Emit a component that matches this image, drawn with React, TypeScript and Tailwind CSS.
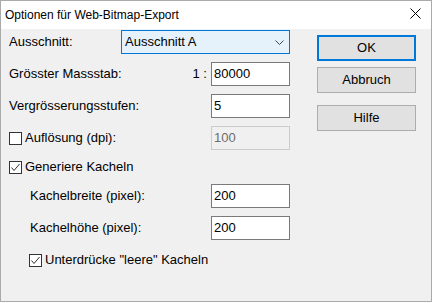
import type { ReactNode } from "react";

const sans = "font-['Liberation_Sans',Arial,sans-serif]";

function Checkbox({ checked }: { checked?: boolean }) {
  return (
    <span className="flex h-[13px] w-[13px] shrink-0 items-center justify-center border border-[#333333] bg-white">
      {checked ? (
        <svg width="11" height="11" viewBox="0 0 11 11">
          <path d="M1.5 5.5 L4 8.5 L9.5 2" fill="none" stroke="#333333" strokeWidth="1" />
        </svg>
      ) : null}
    </span>
  );
}

function Field({ value, disabled }: { value: string; disabled?: boolean }) {
  return (
    <div
      className={
        disabled
          ? "flex h-[24px] w-[79px] shrink-0 items-center border border-[#cccccc] bg-[#f0f0f0] pl-[2px] text-[#6d6d6d]"
          : "flex h-[24px] w-[79px] shrink-0 items-center border border-[#7a7a7a] bg-white pl-[2px] text-black"
      }
    >
      {value}
    </div>
  );
}

function Row({ children, className }: { children: ReactNode; className?: string }) {
  return <div className={`flex h-[24px] items-center ${className ?? ""}`}>{children}</div>;
}

function Button({ label, primary, className }: { label: string; primary?: boolean; className?: string }) {
  return (
    <div
      className={`flex h-[26px] w-[99px] items-center justify-center bg-[#e1e1e1] text-black ${
        primary ? "border-2 border-[#0078d7]" : "border border-[#adadad]"
      } ${className ?? ""}`}
    >
      {label}
    </div>
  );
}

export default function App() {
  return (
    <div className={`h-[303px] w-[433px] bg-white ${sans}`}>
      <div className="flex h-[302px] w-[432px] flex-col border border-[#aaaaaa] bg-[#f0f0f0]">
        {/* title bar */}
        <div className="flex h-[28px] shrink-0 items-center justify-between bg-white pl-[4px] pr-[10px]">
          <span className="text-[12px] text-black">Optionen für Web-Bitmap-Export</span>
          <svg width="11" height="11" viewBox="0 0 11 11" className="-mt-[3px]">
            <path d="M0.5 0.5 L10.5 10.5 M10.5 0.5 L0.5 10.5" stroke="#000" strokeWidth="1" />
          </svg>
        </div>

        <div className="flex flex-1 text-[13px] text-black">
          {/* form */}
          <div className="flex w-[289px] flex-col pl-[8px]">
            <Row className="mt-[1px] justify-between">
              <span>Ausschnitt:</span>
              <div className="flex h-[24px] w-[169px] items-center justify-between border border-[#0078d7] bg-[#e5f1fb] pl-[3px] pr-[5px]">
                <span>Ausschnitt A</span>
                <svg width="9" height="5" viewBox="0 0 9 5">
                  <path d="M0.5 0.5 L4.5 4.5 L8.5 0.5" fill="none" stroke="#444" strokeWidth="1" />
                </svg>
              </div>
            </Row>
            <Row className="mt-[8px]">
              <span className="flex-1">Grösster Massstab:</span>
              <span className="mr-[4px]">1 :</span>
              <Field value="80000" />
            </Row>
            <Row className="mt-[8px] justify-between">
              <span>Vergrösserungsstufen:</span>
              <Field value="5" />
            </Row>
            <Row className="mt-[8px] justify-between">
              <span className="flex items-center gap-[3px]">
                <Checkbox />
                Auflösung (dpi):
              </span>
              <Field value="100" disabled />
            </Row>
            <Row className="mt-[5px]">
              <span className="flex items-center gap-[3px]">
                <Checkbox checked />
                Generiere Kacheln
              </span>
            </Row>
            <Row className="mt-[5px] justify-between pl-[21px]">
              <span>Kachelbreite (pixel):</span>
              <Field value="200" />
            </Row>
            <Row className="mt-[8px] justify-between pl-[21px]">
              <span>Kachelhöhe (pixel):</span>
              <Field value="200" />
            </Row>
            <Row className="mt-[8px] pl-[20px]">
              <span className="flex items-center gap-[3px]">
                <Checkbox checked />
                Unterdrücke "leere" Kacheln
              </span>
            </Row>
          </div>

          {/* buttons */}
          <div className="ml-[27px] flex flex-col pt-[6px]">
            <Button label="OK" primary />
            <Button label="Abbruch" className="mt-[6px]" />
            <Button label="Hilfe" className="mt-[12px]" />
          </div>
        </div>
      </div>
    </div>
  );
}
